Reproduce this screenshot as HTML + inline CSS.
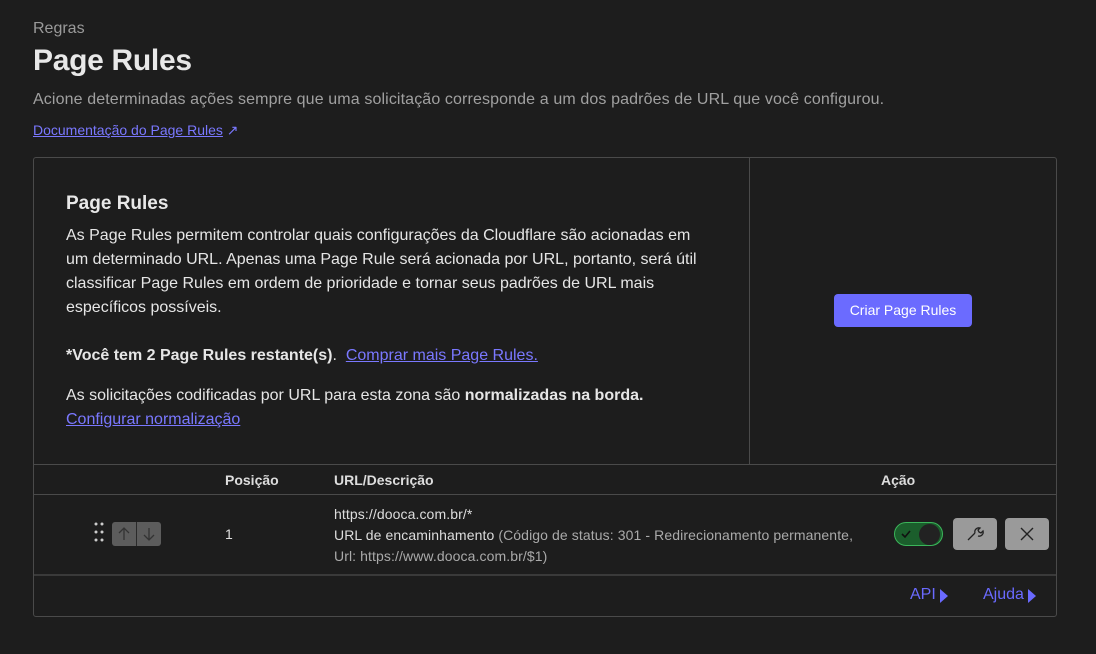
<!DOCTYPE html><html><head><meta charset="utf-8"><style>
*{box-sizing:border-box;margin:0;padding:0}
body{width:1096px;height:654px;background:#1d1d1d;color:#e0e0e0;font-family:"Liberation Sans",sans-serif;position:relative;overflow:hidden}
.a{position:absolute;white-space:nowrap}
a{color:#7a78ff;text-decoration:underline}
.box{position:absolute;left:33px;top:157px;width:1024px;height:460px;border:1px solid #4a4a4a;border-radius:3px}
p{font-size:16px;line-height:24px;color:#e6e6e6}
.btn{position:absolute;border-radius:4px;background:#9a9a9a}
</style></head><body>
<div class="a" style="left:33px;top:20px;font-size:16px;color:#9a9a9a">Regras</div>
<div class="a" style="left:33px;top:44px;font-size:30px;font-weight:bold;color:#e8e8e8;letter-spacing:-0.3px">Page Rules</div>
<div class="a" style="left:33px;top:91px;font-size:16px;color:#a0a0a0;letter-spacing:0.12px">Acione determinadas ações sempre que uma solicitação corresponde a um dos padrões de URL que você configurou.</div>
<div class="a" style="left:33px;top:122px;font-size:14px"><a>Documentação do Page Rules</a> <span style="color:#7a78ff">↗</span></div>
<div class="box">
<div class="a" style="left:715px;top:0;width:1px;height:306px;background:#4a4a4a"></div>
<div class="a" style="left:0;top:306px;width:1022px;height:1px;background:#4a4a4a"></div>
<div class="a" style="left:0;top:336px;width:1022px;height:1px;background:#4a4a4a"></div>
<div class="a" style="left:0;top:416px;width:1022px;height:2px;background:#3a3a3a"></div>
<div class="a" style="left:32px;top:35px;font-size:19px;font-weight:bold;color:#e8e8e8">Page Rules</div>
<div style="position:absolute;left:32px;top:66px;width:650px"><p>As Page Rules permitem controlar quais configurações da Cloudflare são acionadas em um determinado URL. Apenas uma Page Rule será acionada por URL, portanto, será útil classificar Page Rules em ordem de prioridade e tornar seus padrões de URL mais específicos possíveis.</p>
<p style="margin-top:24px"><b>*Você tem 2 Page Rules restante(s)</b>. &nbsp;<a>Comprar mais Page Rules.</a></p>
<p style="margin-top:16px">As solicitações codificadas por URL para esta zona são <b>normalizadas na borda.</b><br><a>Configurar normalização</a></p></div>
<div class="a" style="left:800px;top:136px;width:138px;height:33px;border-radius:4px;color:#fff;font-size:14px;text-align:center;line-height:33px;background:#6b6bff">Criar Page Rules</div>
<div class="a" style="left:191px;top:314px;font-size:14px;font-weight:bold;color:#ddd">Posição</div>
<div class="a" style="left:300px;top:314px;font-size:14px;font-weight:bold;color:#ddd">URL/Descrição</div>
<div class="a" style="left:847px;top:314px;font-size:14px;font-weight:bold;color:#ddd">Ação</div>
<svg class="a" style="left:60px;top:364px" width="10" height="20"><g fill="#ccc"><circle cx="2" cy="2" r="1.5"/><circle cx="8" cy="2" r="1.5"/><circle cx="2" cy="10" r="1.5"/><circle cx="8" cy="10" r="1.5"/><circle cx="2" cy="18" r="1.5"/><circle cx="8" cy="18" r="1.5"/></g></svg>
<div class="a" style="left:78px;top:364px;width:49px;height:24px;background:#5c5c5c;border-radius:3px"></div>
<div class="a" style="left:102px;top:364px;width:1px;height:24px;background:#2a2a2a"></div>
<svg class="a" style="left:78px;top:364px" width="49" height="24" fill="none" stroke="#333" stroke-width="1.3"><path d="M12 18V6M7 11l5-5 5 5M37 6v12M32 13l5 5 5-5"/></svg>
<div class="a" style="left:191px;top:368px;font-size:14px">1</div>
<div class="a" style="left:300px;top:346px;font-size:14px;line-height:21px;color:#ddd;letter-spacing:0.1px">https://dooca.com.br/*<br>URL de encaminhamento <span style="color:#aaa">(Código de status: 301 - Redirecionamento permanente,</span><br><span style="color:#aaa">Url: https://www.dooca.com.br/$1)</span></div>
<div class="a" style="left:860px;top:364px;width:49px;height:24px;border:1.5px solid #3bb55a;background:#1b5e2c;border-radius:12px"></div>
<div class="a" style="left:885px;top:366px;width:21px;height:21px;background:#222;border-radius:11px"></div>
<svg class="a" style="left:866px;top:370px" width="12" height="12" fill="none" stroke="#111" stroke-width="1.6"><path d="M2 6l3 3 5-6"/></svg>
<div class="btn" style="left:919px;top:360px;width:44px;height:32px"></div>
<svg class="a" style="left:931px;top:367px" width="20" height="18" fill="none" stroke="#222" stroke-width="1.3"><path d="M3 15l7-7M10 8a4 4 0 0 1 5-5l-2 2 1 2 2 1 2-2a4 4 0 0 1-5 5"/></svg>
<div class="btn" style="left:971px;top:360px;width:44px;height:32px"></div>
<svg class="a" style="left:985px;top:368px" width="16" height="16" stroke="#222" stroke-width="1.4"><path d="M2 2l12 12M14 2L2 14"/></svg>
<div class="a" style="left:876px;top:428px;font-size:16px;color:#6a6aff">API</div>
<svg class="a" style="left:906px;top:431px" width="8" height="14"><path d="M0 0L8 7L0 14Z" fill="#6a6aff"/></svg>
<div class="a" style="left:949px;top:428px;font-size:16px;color:#6a6aff">Ajuda</div>
<svg class="a" style="left:994px;top:431px" width="8" height="14"><path d="M0 0L8 7L0 14Z" fill="#6a6aff"/></svg>
</div>
</body></html>
